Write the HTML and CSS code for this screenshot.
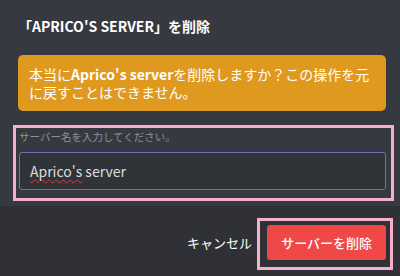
FILE: index.html
```html
<!DOCTYPE html>
<html lang="ja">
<head>
<meta charset="UTF-8" />
<title>サーバーを削除</title>
<link rel="stylesheet" href="styles.css">
</head>
<body>
  <div class="modal">
    <div class="modal-body">
      <h2 class="modal-title">「APRICO'S SERVER」を削除</h2>
      <div class="warning">本当に<strong>Aprico's server</strong>を削除しますか？この操作を元<br>に戻すことはできません。</div>
      <label class="field-label" for="serverName">サーバー名を入力してください。</label>
      <div class="input-box" id="serverName"><span class="misspelled">Aprico's</span> server</div>
    </div>
    <div class="modal-footer">
      <button class="btn-cancel">キャンセル</button>
      <button class="btn-danger">サーバーを削除</button>
    </div>

    <!-- 注釈の枠 -->
    <div class="mark mark-input"></div>
    <div class="mark mark-button"></div>
  </div>
</body>
</html>
```

FILE: styles.css
```css
* {
  box-sizing: border-box;
  margin: 0;
  padding: 0;
}

body {
  background: #36393f;
  font-family: 'Noto Sans CJK JP', 'Noto Sans', sans-serif;
}

.modal {
  position: relative;
  width: 400px;
  height: 276px;
  background: #36393f;
  display: flex;
  flex-direction: column;
}

.modal-body {
  padding: 16px 14px 0 18px;
  height: 206px;
  display: flex;
  flex-direction: column;
}

.modal-title {
  color: #fff;
  font-size: 14px;
  font-weight: 700;
  line-height: 20px;
}

.warning {
  margin-top: 19px;
  background: #e0991f;
  color: #fff;
  border-radius: 5px;
  padding: 10px 8px 10px 11px;
  font-size: 14px;
  line-height: 18px;
  white-space: nowrap;
}

.warning strong {
  font-weight: 700;
}

.field-label {
  margin-top: 19px;
  margin-left: 1px;
  color: #8e9297;
  font-size: 10.5px;
  line-height: 14px;
}

.input-box {
  margin-top: 8px;
  margin-left: 1px;
  height: 38px;
  background: #303338;
  border: 1px solid #6873b5;
  border-radius: 3px;
  color: #dcddde;
  font-size: 14px;
  line-height: 36px;
  padding-left: 10px;
}

.misspelled {
  text-decoration: underline wavy #e0363a;
  text-decoration-thickness: 1px;
  text-underline-offset: 2px;
}

.modal-footer {
  flex: 1;
  background: #2f3136;
  display: flex;
  justify-content: flex-end;
  align-items: flex-start;
  gap: 15px;
  padding: 19px 14px 0 0;
}

.btn-cancel {
  background: none;
  border: none;
  color: #fff;
  font-family: inherit;
  font-size: 13px;
  height: 35px;
  line-height: 35px;
}

.btn-danger {
  background: #f04747;
  border: none;
  border-radius: 3px;
  color: #fff;
  font-family: inherit;
  font-size: 13px;
  font-weight: 500;
  height: 35px;
  padding: 0 14px;
}

.mark {
  position: absolute;
  border: 3px solid #f4afcb;
}

.mark-input {
  left: 13px;
  top: 125px;
  width: 381px;
  height: 76px;
}

.mark-button {
  left: 257px;
  top: 218px;
  width: 136px;
  height: 52px;
}
```
